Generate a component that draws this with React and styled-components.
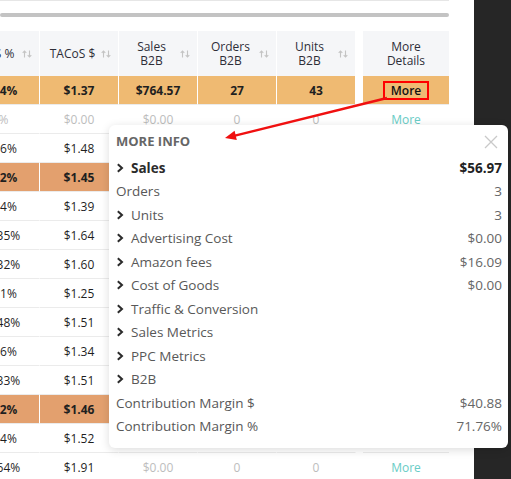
import React, { useLayoutEffect, useRef } from 'react';
import styled, { createGlobalStyle } from 'styled-components';

const GlobalStyle = createGlobalStyle`
  html, body {
    margin: 0;
    padding: 0;
    background: #fff;
  }
  body {
    font-family: "Open Sans", "Liberation Sans", sans-serif;
    color: #333;
  }
`;

const columns = [
  { key: 'acos', label: ['ACoS %'] },
  { key: 'tacos', label: ['TACoS $'] },
  { key: 'sales', label: ['Sales', 'B2B'] },
  { key: 'orders', label: ['Orders', 'B2B'] },
  { key: 'units', label: ['Units', 'B2B'] },
];

const rows = [
  { tone: 'gold', acos: '9.84%', tacos: '$1.37', sales: '$764.57', orders: '27', units: '43', boxed: true },
  { acos: '0%', tacos: '$0.00', sales: '$0.00', orders: '0', units: '0' },
  { acos: '8.16%', tacos: '$1.48', sales: '$56.97', orders: '3', units: '3' },
  { tone: 'amber', acos: '8.12%', tacos: '$1.45', sales: '$120.40', orders: '5', units: '6' },
  { acos: '7.14%', tacos: '$1.39', sales: '$0.00', orders: '0', units: '0' },
  { acos: '11.35%', tacos: '$1.64', sales: '$48.12', orders: '2', units: '2' },
  { acos: '12.32%', tacos: '$1.60', sales: '$0.00', orders: '0', units: '0' },
  { acos: '6.71%', tacos: '$1.25', sales: '$92.35', orders: '4', units: '5' },
  { acos: '13.48%', tacos: '$1.51', sales: '$0.00', orders: '0', units: '0' },
  { acos: '9.26%', tacos: '$1.34', sales: '$36.80', orders: '1', units: '1' },
  { acos: '11.33%', tacos: '$1.51', sales: '$0.00', orders: '0', units: '0' },
  { tone: 'amber', acos: '9.32%', tacos: '$1.46', sales: '$310.50', orders: '11', units: '15' },
  { acos: '8.94%', tacos: '$1.52', sales: '$0.00', orders: '0', units: '0' },
  { acos: '15.64%', tacos: '$1.91', sales: '$0.00', orders: '0', units: '0' },
];

const details = [
  { label: 'Sales', value: '$56.97', expand: true, strong: true },
  { label: 'Orders', value: '3' },
  { label: 'Units', value: '3', expand: true },
  { label: 'Advertising Cost', value: '$0.00', expand: true },
  { label: 'Amazon fees', value: '$16.09', expand: true },
  { label: 'Cost of Goods', value: '$0.00', expand: true },
  { label: 'Traffic & Conversion', expand: true },
  { label: 'Sales Metrics', expand: true },
  { label: 'PPC Metrics', expand: true },
  { label: 'B2B', expand: true },
  { label: 'Contribution Margin $', value: '$40.88' },
  { label: 'Contribution Margin %', value: '71.76%' },
];

const toneColors = {
  gold: '#efba72',
  amber: '#e3a06e',
  plain: '#fff',
};

const isZero = (v) => v === '0' || v === '$0.00' || v === '0%';

const Page = styled.div`
  position: relative;
  display: flex;
  width: 511px;
  height: 479px;
  overflow: hidden;
`;

const Main = styled.div`
  width: 474px;
  flex-shrink: 0;
  background: #fff;
`;

const SidePanel = styled.div`
  flex: 1;
  background: #262626;
`;

const ScrollBar = styled.div`
  width: 449px;
  border-top: 1px solid #e6e6e6;
  padding: 12px 0 14px;
`;

const ScrollThumb = styled.div`
  height: 4px;
  border-radius: 2px;
  background: #c3c3c3;
`;

const Viewport = styled.div`
  width: 449px;
  overflow: hidden;
`;

const Table = styled.div`
  width: 488px;
`;

const Row = styled.div`
  display: flex;
  height: ${(p) => (p.$head ? 45 : 29)}px;
`;

const HeadCell = styled.div`
  box-sizing: border-box;
  width: ${(p) => p.$width}px;
  display: flex;
  align-items: center;
  padding-left: ${(p) => (p.$sortable ? 4 : 0)}px;
  background: #f5f6f8;
  border-right: ${(p) => (p.$last ? 'none' : '1px solid #fff')};
`;

const HeadLabel = styled.div`
  flex: 1;
  text-align: center;
  font-size: 12px;
  line-height: 14px;
  font-weight: 500;
  color: #2e2e38;
`;

const SortIcon = styled.svg`
  width: 10px;
  height: 8px;
  margin-right: 7px;
  flex-shrink: 0;
`;

const Gap = styled.div`
  width: 7px;
  flex-shrink: 0;
`;

const Cell = styled.div`
  box-sizing: border-box;
  width: ${(p) => p.$width}px;
  display: flex;
  align-items: center;
  justify-content: center;
  background: ${(p) => toneColors[p.$tone]};
  border-right: ${(p) => (p.$last ? 'none' : '1px solid #fff')};
  border-bottom: 1px solid #ebebeb;
  font-size: 12px;
  font-weight: ${(p) => (p.$tone === 'plain' ? 400 : 700)};
  color: ${(p) => (p.$muted ? '#bdbdbd' : '#1f1f1f')};
`;

const MoreLink = styled.span`
  font-size: 12px;
  line-height: 15px;
  color: ${(p) => (p.$boxed ? '#111' : '#68ccc6')};
  font-weight: ${(p) => (p.$boxed ? 600 : 400)};
  border: ${(p) => (p.$boxed ? '2px solid #ff0000' : 'none')};
  padding: ${(p) => (p.$boxed ? '0 6px' : '0')};
`;

const Popup = styled.div`
  position: absolute;
  top: 125px;
  left: 109px;
  width: 399px;
  height: 323px;
  box-sizing: border-box;
  padding: 7px 6px 9px 7px;
  background: #fff;
  border-radius: 6px;
  box-shadow: 0 2px 10px rgba(0, 0, 0, 0.14);
`;

const PopupTitle = styled.div`
  font-size: 13px;
  line-height: 18px;
  font-weight: 700;
  color: #666;
  margin-bottom: 6px;
`;

const CloseButton = styled.button`
  position: absolute;
  top: 10px;
  right: 10px;
  width: 14px;
  height: 14px;
  padding: 0;
  border: none;
  background: none;
  display: flex;
`;

const InfoRow = styled.div`
  display: flex;
  align-items: center;
  justify-content: space-between;
  height: 23.5px;
  font-size: 13.5px;
`;

const InfoLabel = styled.div`
  display: flex;
  align-items: center;
  gap: 7px;
  color: ${(p) => (p.$strong ? '#2b2b2b' : '#585858')};
  font-weight: ${(p) => (p.$strong ? 700 : 400)};
`;

const InfoValue = styled.div`
  color: ${(p) => (p.$strong ? '#222' : '#666')};
  font-weight: ${(p) => (p.$strong ? 700 : 400)};
`;

const Overlay = styled.svg`
  position: absolute;
  inset: 0;
  pointer-events: none;
`;

function Sort() {
  return (
    <SortIcon viewBox="0 0 10 8">
      <g fill="none" stroke="#c4c4c4" strokeWidth="1.1">
        <path d="M2.5 7.5V1M0.7 2.8L2.5 1l1.8 1.8" />
        <path d="M7.5 0.5V7M5.7 5.2L7.5 7l1.8-1.8" />
      </g>
    </SortIcon>
  );
}

function Chevron() {
  return (
    <svg width="8" height="10" viewBox="0 0 8 10">
      <path d="M1.8 1.2L6 5L1.8 8.8" fill="none" stroke="#2b2b2b" strokeWidth="2" />
    </svg>
  );
}

function DataTable() {
  const ref = useRef(null);

  // the table is scrolled sideways a little, as in the screenshot
  useLayoutEffect(() => {
    if (ref.current) ref.current.scrollLeft = 39;
  }, []);

  return (
    <Viewport ref={ref}>
      <Table>
        <Row $head>
          {columns.map((c) => (
            <HeadCell key={c.key} $width={79} $sortable>
              <HeadLabel>
                {c.label.map((l) => (
                  <div key={l}>{l}</div>
                ))}
              </HeadLabel>
              <Sort />
            </HeadCell>
          ))}
          <Gap />
          <HeadCell $width={86} $last>
            <HeadLabel>
              <div>More</div>
              <div>Details</div>
            </HeadLabel>
          </HeadCell>
        </Row>
        {rows.map((r, i) => {
          const tone = r.tone || 'plain';
          return (
            <Row key={i}>
              {columns.map((c) => (
                <Cell key={c.key} $width={79} $tone={tone} $muted={isZero(r[c.key])}>
                  {r[c.key]}
                </Cell>
              ))}
              <Gap />
              <Cell $width={86} $tone={tone} $last>
                <MoreLink $boxed={r.boxed}>More</MoreLink>
              </Cell>
            </Row>
          );
        })}
      </Table>
    </Viewport>
  );
}

function MoreInfo() {
  return (
    <Popup>
      <PopupTitle>MORE INFO</PopupTitle>
      <CloseButton aria-label="Close">
        <svg width="14" height="14" viewBox="0 0 14 14">
          <path d="M1 1L13 13M13 1L1 13" stroke="#c9c9c9" strokeWidth="1.3" />
        </svg>
      </CloseButton>
      {details.map((d) => (
        <InfoRow key={d.label}>
          <InfoLabel $strong={d.strong}>
            {d.expand && <Chevron />}
            {d.label}
          </InfoLabel>
          {d.value && <InfoValue $strong={d.strong}>{d.value}</InfoValue>}
        </InfoRow>
      ))}
    </Popup>
  );
}

export default function App() {
  return (
    <>
      <GlobalStyle />
      <Page>
        <Main>
          <ScrollBar>
            <ScrollThumb />
          </ScrollBar>
          <DataTable />
        </Main>
        <SidePanel />
        <MoreInfo />
        <Overlay width="511" height="479" viewBox="0 0 511 479">
          <line x1="387" y1="98" x2="234" y2="135.8" stroke="#f01010" strokeWidth="2.4" />
          <polygon points="225,138 236.8,139.9 234.6,130.8" fill="#f01010" />
        </Overlay>
      </Page>
    </>
  );
}
